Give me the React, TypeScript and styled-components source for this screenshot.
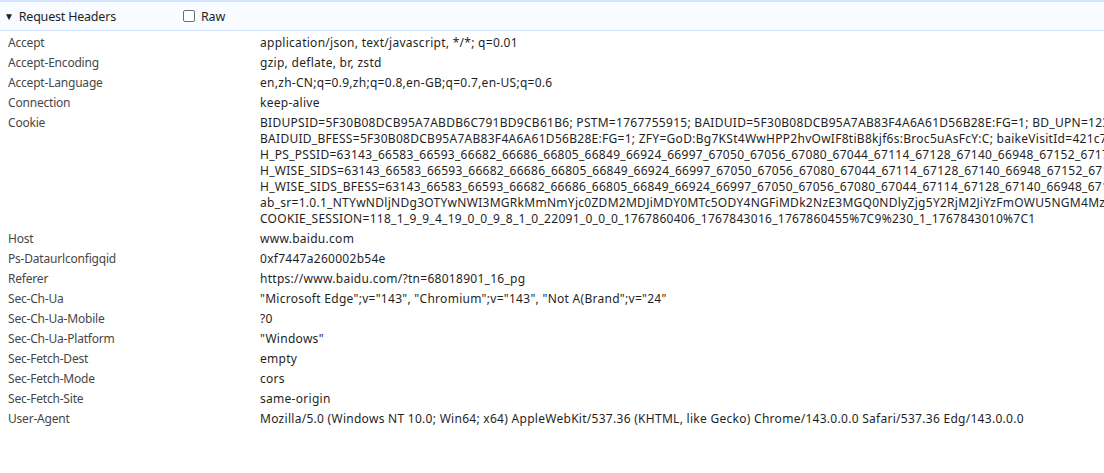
import React from 'react';
import styled, { createGlobalStyle } from 'styled-components';

const GlobalStyle = createGlobalStyle`
  html, body {
    margin: 0;
    padding: 0;
    background: #ffffff;
    overflow: hidden;
  }
  body {
    font-family: "Noto Sans", "Segoe UI", "Liberation Sans", sans-serif;
    font-size: 12px;
    color: #202124;
  }
`;

const Panel = styled.div`
  width: 1104px;
  height: 473px;
  overflow: hidden;
  border-top: 2px solid #d3e3fd;
  box-sizing: border-box;
`;

const SectionHeader = styled.div`
  display: flex;
  align-items: center;
  height: 28px;
  background: #f8fbff;
  border-bottom: 1px solid #d3e3fd;
  font-size: 12.5px;
  letter-spacing: -0.2px;
  color: #1f1f1f;
`;

const Toggle = styled.div`
  display: flex;
  align-items: center;
  gap: 5px;
  width: 183px;
  padding-left: 4px;
  box-sizing: border-box;
`;

const Triangle = styled.span`
  font-size: 10px;
  line-height: 1;
  color: #1f1f1f;
`;

const RawLabel = styled.label`
  display: flex;
  align-items: center;
  gap: 6px;
`;

const Checkbox = styled.span`
  width: 10px;
  height: 10px;
  border: 1px solid #6e6e6e;
  border-radius: 2px;
  background: #fff;
`;

const Rows = styled.div`
  padding-top: 2px;
`;

const Row = styled.div`
  display: grid;
  grid-template-columns: 252px 1fr;
  padding: 2px 0 2px 8px;
  line-height: 16px;
`;

const Name = styled.div`
  color: #474747;
  letter-spacing: -0.2px;
`;

const Value = styled.div`
  color: #1f1f1f;
  white-space: nowrap;
  letter-spacing: 0.28px;
`;

const Line = styled.div``;

const headers: { name: string; value: string[] }[] = [
  { name: 'Accept', value: ['application/json, text/javascript, */*; q=0.01'] },
  { name: 'Accept-Encoding', value: ['gzip, deflate, br, zstd'] },
  { name: 'Accept-Language', value: ['en,zh-CN;q=0.9,zh;q=0.8,en-GB;q=0.7,en-US;q=0.6'] },
  { name: 'Connection', value: ['keep-alive'] },
  {
    name: 'Cookie',
    value: [
      'BIDUPSID=5F30B08DCB95A7ABDB6C791BD9CB61B6; PSTM=1767755915; BAIDUID=5F30B08DCB95A7AB83F4A6A61D56B28E:FG=1; BD_UPN=12314753; BA_HECTOR=a4a1',
      'BAIDUID_BFESS=5F30B08DCB95A7AB83F4A6A61D56B28E:FG=1; ZFY=GoD:Bg7KSt4WwHPP2hvOwIF8tiB8kjf6s:Broc5uAsFcY:C; baikeVisitId=421c7958-1d2e',
      'H_PS_PSSID=63143_66583_66593_66682_66686_66805_66849_66924_66997_67050_67056_67080_67044_67114_67128_67140_66948_67152_67179_67183',
      'H_WISE_SIDS=63143_66583_66593_66682_66686_66805_66849_66924_66997_67050_67056_67080_67044_67114_67128_67140_66948_67152_67179_67183',
      'H_WISE_SIDS_BFESS=63143_66583_66593_66682_66686_66805_66849_66924_66997_67050_67056_67080_67044_67114_67128_67140_66948_67152_67179',
      'ab_sr=1.0.1_NTYwNDljNDg3OTYwNWI3MGRkMmNmYjc0ZDM2MDJiMDY0MTc5ODY4NGFiMDk2NzE3MGQ0NDlyZjg5Y2RjM2JiYzFmOWU5NGM4MzY3',
      'COOKIE_SESSION=118_1_9_9_4_19_0_0_9_8_1_0_22091_0_0_0_1767860406_1767843016_1767860455%7C9%230_1_1767843010%7C1',
    ],
  },
  { name: 'Host', value: ['www.baidu.com'] },
  { name: 'Ps-Dataurlconfigqid', value: ['0xf7447a260002b54e'] },
  { name: 'Referer', value: ['https://www.baidu.com/?tn=68018901_16_pg'] },
  { name: 'Sec-Ch-Ua', value: ['"Microsoft Edge";v="143", "Chromium";v="143", "Not A(Brand";v="24"'] },
  { name: 'Sec-Ch-Ua-Mobile', value: ['?0'] },
  { name: 'Sec-Ch-Ua-Platform', value: ['"Windows"'] },
  { name: 'Sec-Fetch-Dest', value: ['empty'] },
  { name: 'Sec-Fetch-Mode', value: ['cors'] },
  { name: 'Sec-Fetch-Site', value: ['same-origin'] },
  {
    name: 'User-Agent',
    value: [
      'Mozilla/5.0 (Windows NT 10.0; Win64; x64) AppleWebKit/537.36 (KHTML, like Gecko) Chrome/143.0.0.0 Safari/537.36 Edg/143.0.0.0',
    ],
  },
];

const App: React.FC = () => {
  return (
    <>
      <GlobalStyle />
      <Panel>
        <SectionHeader>
          <Toggle>
            <Triangle>▼</Triangle>
            <span>Request Headers</span>
          </Toggle>
          <RawLabel>
            <Checkbox />
            <span>Raw</span>
          </RawLabel>
        </SectionHeader>
        <Rows>
          {headers.map((h) => (
            <Row key={h.name}>
              <Name>{h.name}</Name>
              <Value>
                {h.value.map((line, i) => (
                  <Line key={i}>{line}</Line>
                ))}
              </Value>
            </Row>
          ))}
        </Rows>
      </Panel>
    </>
  );
};

export default App;
